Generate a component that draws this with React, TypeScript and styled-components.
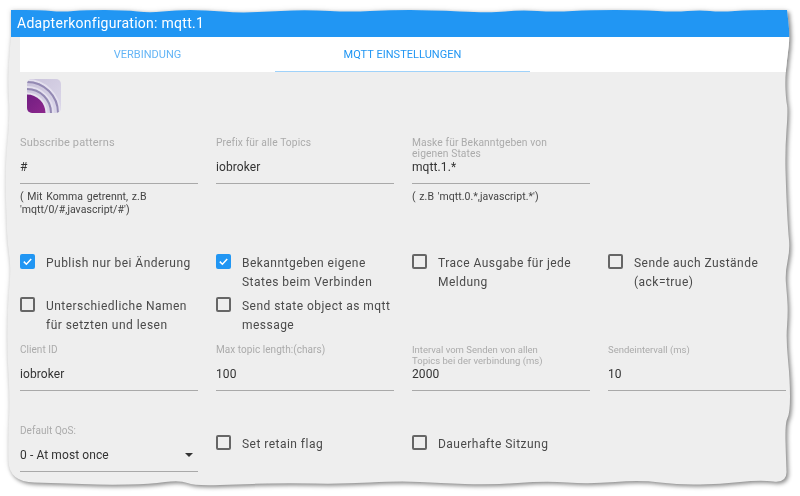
import React from "react";
import styled, { createGlobalStyle } from "styled-components";

const GlobalStyle = createGlobalStyle`
  html, body {
    margin: 0;
    padding: 0;
    background: #fff;
    font-family: Roboto, "Liberation Sans", sans-serif;
  }
`;

// torn paper edge of the screenshot, page coordinates
const edgePoints = [
  [11, 10], [11, 10], [40, 10], [62, 12], [85, 10], [125, 10], [150, 13], [175, 10], [205, 10],
  [240, 13], [275, 11], [310, 10], [350, 12], [390, 10], [430, 10], [490, 13], [520, 10],
  [555, 12], [590, 10], [640, 10], [675, 12], [700, 10], [720, 12], [750, 10], [787, 10], [787, 10],
  [790, 36], [787, 60], [785, 80], [786, 100], [788, 110], [785, 150], [786, 190],
  [788, 230], [790, 250], [785, 273], [787, 295], [788, 313], [786, 340], [790, 380],
  [790, 413], [785, 423], [786, 460], [787, 483], [760, 480], [720, 484], [680, 485],
  [640, 480], [590, 484], [545, 481], [490, 485], [440, 483], [400, 481], [340, 484],
  [290, 483], [245, 484], [195, 486], [180, 480], [150, 484], [105, 485], [60, 483],
  [9, 482], [8, 440], [10, 400], [7, 350], [8, 300], [11, 270], [8, 246], [7, 233],
  [5, 167], [10, 117], [8, 85], [9, 60], [11, 36], [11, 36],
];

const tornPath = (points: number[][]) => {
  const mid = (a: number[], b: number[]) => `${(a[0] + b[0]) / 2} ${(a[1] + b[1]) / 2}`;
  let d = `M ${mid(points[points.length - 1], points[0])}`;
  points.forEach((p, i) => {
    d += ` Q ${p[0]} ${p[1]} ${mid(p, points[(i + 1) % points.length])}`;
  });
  return d + " Z";
};

const Page = styled.div`
  width: 800px;
  height: 496px;
  overflow: hidden;
  filter: drop-shadow(2px 2px 2px rgba(0, 0, 0, 0.45)) drop-shadow(-1px -1px 2px rgba(0, 0, 0, 0.08));
`;

const Sheet = styled.div`
  width: 800px;
  height: 496px;
  box-sizing: border-box;
  padding: 8px 10px 0 11px;
  background: #eeeeee;
  clip-path: path("${tornPath(edgePoints)}");
`;

const TitleBar = styled.div`
  height: 29px;
  padding-left: 6px;
  line-height: 31px;
  background: #2196f3;
  color: #fff;
  font-size: 14px;
  letter-spacing: 0.27px;
`;

const TabBar = styled.div`
  display: flex;
  height: 35px;
  margin: 0 -2px 0 9px;
  background: #fff;
`;

const Tab = styled.div<{ $active?: boolean }>`
  width: 255px;
  box-sizing: border-box;
  text-align: center;
  line-height: 36px;
  font-size: 11px;
  color: ${(p) => (p.$active ? "#2196f3" : "#64b5f6")};
  letter-spacing: 0.03px;
  border-bottom: 1px solid ${(p) => (p.$active ? "#9fd2fa" : "transparent")};
`;

const LogoWrap = styled.div`
  height: 34px;
  margin: 7px 0 23px 16px;
  svg {
    display: block;
  }
`;

const Form = styled.div`
  padding-left: 9px;
`;

const Grid = styled.div<{ $top?: number; $rowGap?: number }>`
  display: grid;
  grid-template-columns: repeat(4, 178px);
  column-gap: 18px;
  row-gap: ${(p) => p.$rowGap ?? 0}px;
  margin-top: ${(p) => p.$top ?? 0}px;
`;

const FieldLabel = styled.div<{ $size: number; $spacing: number; $wrap?: number }>`
  height: 21px;
  padding-top: 1px;
  max-width: ${(p) => p.$wrap ?? 178}px;
  color: #ababab;
  font-size: ${(p) => p.$size}px;
  line-height: 11px;
  letter-spacing: ${(p) => p.$spacing}px;
`;

const Value = styled.div`
  height: 15px;
  padding: 1px 0 9px;
  border-bottom: 1px solid #a9a9a9;
  color: #333;
  font-size: 12px;
  line-height: 14px;
  letter-spacing: 0.1px;
  display: flex;
  align-items: center;
  justify-content: space-between;
`;

const Helper = styled.div`
  margin-top: 6px;
  color: #444;
  font-size: 10.5px;
  line-height: 13px;
  letter-spacing: 0.05px;
  word-spacing: 1px;
`;

const Arrow = styled.span`
  width: 0;
  height: 0;
  margin-right: 5px;
  border-left: 4px solid transparent;
  border-right: 4px solid transparent;
  border-top: 4px solid #333;
`;

const CheckRow = styled.div<{ $offset?: number }>`
  display: flex;
  gap: 11px;
  padding-top: ${(p) => p.$offset ?? 0}px;
`;

const Box = styled.span<{ $checked?: boolean }>`
  flex: none;
  width: 15px;
  height: 15px;
  margin-top: 1px;
  box-sizing: border-box;
  border-radius: 2px;
  border: ${(p) => (p.$checked ? "none" : "2px solid #666")};
  background: ${(p) => (p.$checked ? "#2196f3" : "transparent")};
  svg {
    display: block;
  }
`;

const CheckText = styled.span`
  margin-top: 1px;
  color: #4a4a4a;
  font-size: 12px;
  line-height: 19px;
  letter-spacing: 0.47px;
`;

const Logo = () => (
  <svg width="34" height="34" viewBox="0 0 34 34">
    <defs>
      <linearGradient id="bg" x1="0" y1="0" x2="1" y2="1">
        <stop offset="0" stopColor="#c9c2da" />
        <stop offset="1" stopColor="#dcd8ea" />
      </linearGradient>
      <linearGradient id="core" x1="0" y1="0" x2="1" y2="1">
        <stop offset="0" stopColor="#64197c" />
        <stop offset="1" stopColor="#9a2c92" />
      </linearGradient>
      <clipPath id="round">
        <rect width="34" height="34" rx="5" />
      </clipPath>
    </defs>
    <g clipPath="url(#round)">
      <rect width="34" height="34" fill="url(#bg)" />
      <g fill="none" strokeWidth="2">
        <circle cx="0" cy="34" r="33" stroke="#e4e0ee" />
        <circle cx="0" cy="34" r="31" stroke="#9389b3" />
        <circle cx="0" cy="34" r="26" stroke="#e4e0ee" />
        <circle cx="0" cy="34" r="24" stroke="#9389b3" />
      </g>
      <circle cx="0" cy="34" r="20.5" fill="#e6e2ee" />
      <circle cx="0" cy="34" r="18.5" fill="url(#core)" />
    </g>
  </svg>
);

const Check = ({ label, checked, offset }: { label: string; checked?: boolean; offset?: number }) => (
  <CheckRow $offset={offset}>
    <Box $checked={checked}>
      {checked && (
        <svg width="15" height="15" viewBox="0 0 15 15">
          <path d="M3.8 7.6l2.6 2.6 4.8-5.2" fill="none" stroke="#fff" strokeWidth="1.5" />
        </svg>
      )}
    </Box>
    <CheckText>{label}</CheckText>
  </CheckRow>
);

const Field = ({
  label,
  value,
  helper,
  size = 10,
  spacing = 0.05,
  wrap,
  select,
}: {
  label: string;
  value: string;
  helper?: React.ReactNode;
  size?: number;
  spacing?: number;
  wrap?: number;
  select?: boolean;
}) => (
  <div>
    <FieldLabel $size={size} $spacing={spacing} $wrap={wrap}>
      {label}
    </FieldLabel>
    <Value>
      {value}
      {select && <Arrow />}
    </Value>
    {helper && <Helper>{helper}</Helper>}
  </div>
);

const App = () => {
  return (
    <Page>
      <GlobalStyle />
      <Sheet>
        <TitleBar>Adapterkonfiguration: mqtt.1</TitleBar>
        <TabBar>
          <Tab>VERBINDUNG</Tab>
          <Tab $active>MQTT EINSTELLUNGEN</Tab>
        </TabBar>
        <LogoWrap>
          <Logo />
        </LogoWrap>
        <Form>
          <Grid>
            <Field
              label="Subscribe patterns"
              value="#"
              size={11}
              spacing={0.15}
              helper={
                <>
                  ( Mit Komma getrennt, z.B
                  <br />
                  'mqtt/0/#,javascript/#')
                </>
              }
            />
            <Field label="Prefix für alle Topics" value="iobroker" size={10.25} spacing={0.1} />
            <Field
              label="Maske für Bekanntgeben von eigenen States"
              value="mqtt.1.*"
              size={10.25}
              spacing={0.1}
              wrap={150}
              helper="( z.B 'mqtt.0.*,javascript.*')"
            />
          </Grid>
          <Grid $top={37} $rowGap={4}>
            <Check label="Publish nur bei Änderung" checked />
            <Check label="Bekanntgeben eigene States beim Verbinden" checked />
            <Check label="Trace Ausgabe für jede Meldung" />
            <Check label="Sende auch Zustände (ack=true)" />
            <Check label="Unterschiedliche Namen für setzten und lesen" />
            <Check label="Send state object as mqtt message" />
          </Grid>
          <Grid $top={8}>
            <Field label="Client ID" value="iobroker" />
            <Field label="Max topic length:(chars)" value="100" />
            <Field
              label="Interval vom Senden von allen Topics bei der verbindung (ms)"
              value="2000"
              size={9.5}
              spacing={0}
              wrap={140}
            />
            <Field label="Sendeintervall (ms)" value="10" size={9.5} spacing={0} />
          </Grid>
          <Grid $top={33}>
            <Field label="Default QoS:" value="0 - At most once" select />
            <Check label="Set retain flag" offset={10} />
            <Check label="Dauerhafte Sitzung" offset={10} />
          </Grid>
        </Form>
      </Sheet>
    </Page>
  );
};

export default App;
